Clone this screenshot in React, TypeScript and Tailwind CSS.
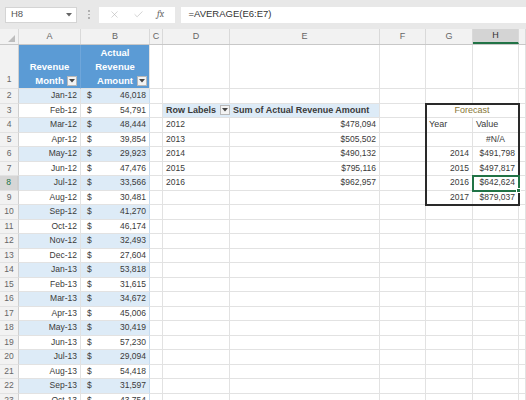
import { X, Check } from "lucide-react";
import clsx from "clsx";

const W = [
  "w-[19px]",
  "w-[62px]",
  "w-[69px]",
  "w-[13px]",
  "w-[67px]",
  "w-[150px]",
  "w-[46px]",
  "w-[47px]",
  "w-[46px]",
  "w-[7px]",
];
const LETTERS = ["", "A", "B", "C", "D", "E", "F", "G", "H", ""];

const revenue: [string, string][] = [
  ["Jan-12", "46,018"],
  ["Feb-12", "54,791"],
  ["Mar-12", "48,444"],
  ["Apr-12", "39,854"],
  ["May-12", "29,923"],
  ["Jun-12", "47,476"],
  ["Jul-12", "33,566"],
  ["Aug-12", "30,481"],
  ["Sep-12", "41,270"],
  ["Oct-12", "46,174"],
  ["Nov-12", "32,493"],
  ["Dec-12", "27,604"],
  ["Jan-13", "53,818"],
  ["Feb-13", "31,615"],
  ["Mar-13", "34,672"],
  ["Apr-13", "45,006"],
  ["May-13", "30,419"],
  ["Jun-13", "57,230"],
  ["Jul-13", "29,094"],
  ["Aug-13", "54,418"],
  ["Sep-13", "31,597"],
  ["Oct-13", "43,754"],
];

const pivot: Record<number, [string, string]> = {
  4: ["2012", "$478,094"],
  5: ["2013", "$505,502"],
  6: ["2014", "$490,132"],
  7: ["2015", "$795,116"],
  8: ["2016", "$962,957"],
};

const forecast: Record<number, [string, string]> = {
  6: ["2014", "$491,798"],
  7: ["2015", "$497,817"],
  8: ["2016", "$642,624"],
  9: ["2017", "$879,037"],
};

function FilterButton() {
  return (
    <span className="flex h-[10px] w-[10px] shrink-0 items-center justify-center border border-[#b8b8b8] bg-[#f3f3f3]">
      <svg width="6" height="4" viewBox="0 0 6 4">
        <path d="M0 0h6L3 3.5z" fill="#444" />
      </svg>
    </span>
  );
}

function Cell({ i, className, children }: { i: number; className?: string; children?: React.ReactNode }) {
  return (
    <div
      className={clsx(
        "flex h-full shrink-0 items-center overflow-hidden whitespace-nowrap border-r border-b border-[#e2e2e2] px-[3px]",
        W[i],
        className
      )}
    >
      {children}
    </div>
  );
}

function DataRow({ r }: { r: number }) {
  const [month, amount] = revenue[r - 2];
  const band = r % 2 === 0 ? "bg-[#ddebf7]" : "bg-white";
  const p = pivot[r];
  const f = forecast[r];

  return (
    <div className="flex h-[14.5px] shrink-0">
      <Cell
        i={0}
        className={clsx(
          "justify-center border-r-[#cfcfcf] text-[#666]",
          r === 8 ? "border-r-2 border-r-[#217346] bg-[#d6d6d6] text-[#217346]" : "bg-[#f2f2f2]"
        )}
      >
        {r}
      </Cell>
      <Cell i={1} className={clsx("justify-end", band)}>
        {month}
      </Cell>
      <Cell i={2} className={clsx("justify-between border-r-[#c6dcf0]", band)}>
        <span className="pl-[3px]">$</span>
        <span>{amount}</span>
      </Cell>
      <Cell i={3} />
      {r === 3 ? (
        <>
          <Cell i={4} className="gap-[4px] border-r-0 bg-[#ddebf7] text-[9px] font-bold">
            <span>Row Labels</span>
            <FilterButton />
          </Cell>
          <Cell i={5} className="bg-[#ddebf7] text-[9px] font-bold">
            Sum of Actual Revenue Amount
          </Cell>
        </>
      ) : (
        <>
          <Cell i={4}>{p?.[0]}</Cell>
          <Cell i={5} className="justify-end">
            {p?.[1]}
          </Cell>
        </>
      )}
      <Cell i={6} />
      {r === 3 ? (
        <div className="flex h-full w-[93px] shrink-0 items-center justify-center border-r border-b border-[#e2e2e2] text-[9px] text-[#877636]">
          Forecast
        </div>
      ) : r === 4 ? (
        <>
          <Cell i={7} className="text-[9px]">Year</Cell>
          <Cell i={8} className="text-[9px]">Value</Cell>
        </>
      ) : r === 5 ? (
        <>
          <Cell i={7} />
          <Cell i={8} className="justify-center">
            #N/A
          </Cell>
        </>
      ) : (
        <>
          <Cell i={7} className="justify-end">
            {f?.[0]}
          </Cell>
          <Cell i={8} className="justify-end">
            {f?.[1]}
          </Cell>
        </>
      )}
      <Cell i={9} />
    </div>
  );
}

export default function App() {
  const rows = Array.from({ length: 22 }, (_, k) => k + 2);

  return (
    <div
      className="relative h-[400px] w-[526px] overflow-hidden bg-white text-[8.5px] text-[#3a3a3a]"
      style={{ fontFamily: '"Liberation Sans", Arial, sans-serif' }}
    >
      {/* formula bar */}
      <div className="flex h-[29px] items-center bg-[#e8e8e8] pl-[5px]">
        <div className="flex h-[16px] w-[72px] items-center justify-between border border-[#d4d4d4] bg-white pl-[5px] pr-[4px] text-[9.5px] text-[#555]">
          <span>H8</span>
          <svg width="6" height="4" viewBox="0 0 6 4">
            <path d="M0 0h6L3 3.5z" fill="#666" />
          </svg>
        </div>
        <div className="ml-[11px] flex flex-col gap-[2px]">
          <span className="h-[1.5px] w-[1.5px] bg-[#b0b0b0]" />
          <span className="h-[1.5px] w-[1.5px] bg-[#b0b0b0]" />
          <span className="h-[1.5px] w-[1.5px] bg-[#b0b0b0]" />
        </div>
        <div className="ml-[9px] flex h-[16px] w-[76px] items-center justify-around bg-white px-[4px]">
          <X size={11} strokeWidth={1.2} color="#b0b0b0" />
          <Check size={11} strokeWidth={1.2} color="#b0b0b0" />
          <span className="font-serif text-[9.5px] italic text-[#666]">fx</span>
        </div>
        <div className="ml-[6px] flex h-[16px] flex-1 items-center bg-white pl-[8px] text-[9.5px] text-[#333]">
          =AVERAGE(E6:E7)
        </div>
      </div>

      {/* column headers */}
      <div className="flex h-[16px] border-b border-[#c8c8c8] bg-[#f2f2f2] text-[9px] text-[#666]">
        {LETTERS.map((l, i) => (
          <div
            key={i}
            className={clsx(
              "relative flex h-full shrink-0 items-center justify-center border-r border-[#d9d9d9]",
              W[i],
              i === 8 && "border-b-2 border-b-[#217346] bg-[#d4d4d4] text-[#333]"
            )}
          >
            {i === 0 ? (
              <svg className="absolute bottom-[2px] right-[3px]" width="7" height="7" viewBox="0 0 7 7">
                <path d="M7 0v7H0z" fill="#bdbdbd" />
              </svg>
            ) : (
              l
            )}
          </div>
        ))}
      </div>

      {/* sheet body */}
      <div className="relative">
        <div className="flex h-[44px]">
          <Cell i={0} className="items-end justify-center border-r-[#cfcfcf] bg-[#f2f2f2] pb-[2px] text-[#666]">
            1
          </Cell>
          <Cell i={1} className="relative items-end justify-center border-r-[#6fa6da] bg-[#5b9bd5] text-[9.5px] font-bold leading-[14px] text-white">
            <div className="text-center">
              Revenue
              <br />
              Month
            </div>
            <span className="absolute bottom-[2px] right-[3px]">
              <FilterButton />
            </span>
          </Cell>
          <Cell i={2} className="relative items-end justify-center bg-[#5b9bd5] text-[9.5px] font-bold leading-[14px] text-white">
            <div className="text-center">
              Actual
              <br />
              Revenue
              <br />
              Amount
            </div>
            <span className="absolute bottom-[2px] right-[2px]">
              <FilterButton />
            </span>
          </Cell>
          {[3, 4, 5, 6, 7, 8, 9].map((i) => (
            <Cell key={i} i={i} />
          ))}
        </div>

        {rows.map((r) => (
          <DataRow key={r} r={r} />
        ))}

        {/* forecast block outline */}
        <div className="pointer-events-none absolute left-[425px] top-[57.5px] h-[103px] w-[95px] border-2 border-[#2a2a2a]" />

        {/* active cell H8 */}
        <div className="pointer-events-none absolute left-[472px] top-[130px] h-[16.5px] w-[48px] border-2 border-[#217346]">
          <span className="absolute -bottom-[3px] -right-[3px] h-[5px] w-[5px] border border-white bg-[#217346]" />
        </div>
      </div>
    </div>
  );
}
